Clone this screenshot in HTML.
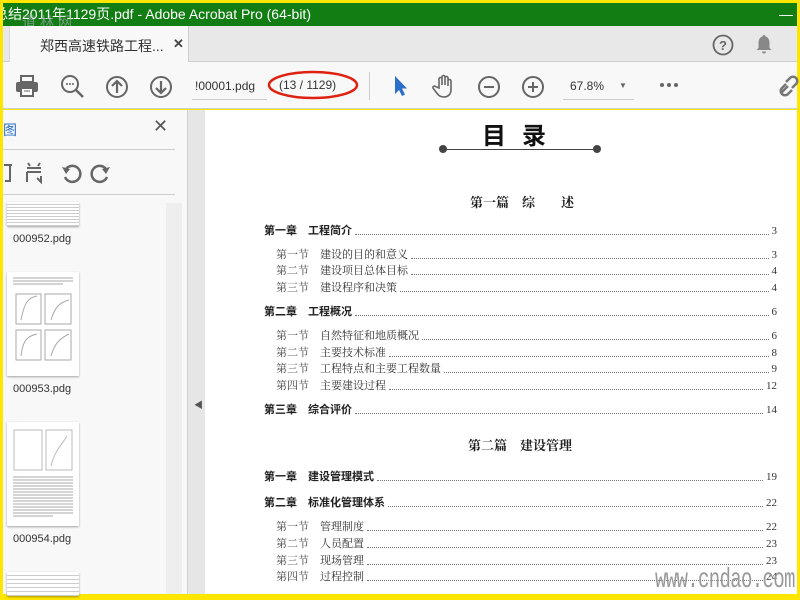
<!DOCTYPE html>
<html><head><meta charset="utf-8"><style>
*{margin:0;padding:0;box-sizing:border-box}
body{width:800px;height:600px;overflow:hidden;background:#ffe600;position:relative;font-family:"Liberation Sans","Noto Sans CJK SC",sans-serif}
.abs{position:absolute}
.title{left:3px;top:3px;width:794px;height:23px;background:#127d13;color:#fff;font-size:14px;line-height:22px;white-space:nowrap;overflow:hidden}
.tabbar{left:3px;top:26px;width:794px;height:36px;background:#e8e8e8;border-bottom:1px solid #cfcfcf}
.tab{left:6px;top:0;width:180px;height:37px;background:#f8f8f8;border-right:1px solid #cfcfcf;border-left:1px solid #d8d8d8}
.toolbar{left:3px;top:62px;width:794px;height:47px;background:#f8f8f8;border-bottom:1px solid #cfcfcf}
.side{left:3px;top:110px;width:185px;height:484px;background:#f8f8f8;border-right:1px solid #cfcfcf}
.gutter{left:188px;top:110px;width:17px;height:484px;background:#e6e6e6}
.page{left:205px;top:110px;width:592px;height:484px;background:#fff}
.row{position:absolute;display:flex;align-items:flex-end;font-family:"Liberation Serif","Noto Serif CJK SC",serif;font-size:11px;color:#333;white-space:nowrap;right:20px;height:14px;line-height:14px}
.row .d{flex:1;border-bottom:1px dotted #777;margin:0 3px 3px}
.row b{font-family:"Liberation Sans","Noto Sans CJK SC",sans-serif;font-weight:bold;color:#222}
.sec{left:71px}.chap{left:59px}
.sec span.n{width:44px;display:inline-block;color:#444}
.chap span.n{width:44px;display:inline-block}
.thumb{position:absolute;left:7px;width:72px;background:#fff;box-shadow:0 1px 2px rgba(0,0,0,.35);overflow:hidden}
.lbl{position:absolute;left:13px;font-size:11px;color:#333}
.ic{position:absolute}
</style></head><body>
<div class="abs title"><span style="position:relative;left:-9px">总结2011年1129页.pdf - Adobe Acrobat Pro (64-bit)</span><span style="position:absolute;right:4px;top:0">—</span></div>
<div class="abs" style="left:22px;top:12px;font-size:14px;color:#9aa;letter-spacing:4px;opacity:.7">道林网</div>
<div class="abs tabbar">
 <div class="abs tab"><span style="position:absolute;left:30px;top:10px;font-size:14px;color:#333">郑西高速铁路工程...</span><span style="position:absolute;left:163px;top:10px;font-size:13px;color:#444;font-weight:bold">✕</span></div>
 <svg class="ic" style="left:709px;top:8px" width="22" height="22"><circle cx="11" cy="11" r="9.5" fill="none" stroke="#666" stroke-width="1.8"/><text x="11" y="16" text-anchor="middle" font-size="13" font-weight="bold" fill="#666" font-family="Liberation Sans">?</text></svg>
 <svg class="ic" style="left:751px;top:7px" width="20" height="22"><path d="M10 2c-1 0-1.5.8-1.5 1.5C5 4.5 4.5 8 4.5 10v5L2.5 17h15l-2-2v-5c0-2-.5-5.5-4-6.5C11.5 2.8 11 2 10 2z" fill="#888"/><path d="M8 18.5a2 2 0 004 0z" fill="#888"/></svg>
</div>
<div class="abs toolbar">
 <svg class="ic" style="left:12px;top:13px" width="24" height="22"><rect x="6" y="1" width="12" height="6" fill="none" stroke="#666" stroke-width="2"/><rect x="1" y="7" width="22" height="10" rx="2" fill="#666"/><rect x="6" y="13" width="12" height="8" fill="#fff" stroke="#666" stroke-width="2"/><line x1="9" y1="16" x2="15" y2="16" stroke="#666"/></svg>
 <svg class="ic" style="left:57px;top:12px" width="26" height="26"><circle cx="10" cy="10" r="8" fill="none" stroke="#666" stroke-width="2"/><line x1="16" y1="16" x2="23" y2="23" stroke="#666" stroke-width="2.5"/><circle cx="7" cy="10" r="1" fill="#666"/><circle cx="10" cy="10" r="1" fill="#666"/><circle cx="13" cy="10" r="1" fill="#666"/></svg>
 <svg class="ic" style="left:102px;top:13px" width="24" height="24"><circle cx="12" cy="12" r="10" fill="none" stroke="#666" stroke-width="2"/><path d="M12 18V6M7 11l5-5 5 5" fill="none" stroke="#666" stroke-width="2.2"/></svg>
 <svg class="ic" style="left:146px;top:13px" width="24" height="24"><circle cx="12" cy="12" r="10" fill="none" stroke="#666" stroke-width="2"/><path d="M12 6v12M7 13l5 5 5-5" fill="none" stroke="#666" stroke-width="2.2"/></svg>
 <div class="abs" style="left:189px;top:15px;width:75px;height:23px;border-bottom:1px solid #ccc;font-size:12px;color:#333;line-height:18px;padding-left:3px">!00001.pdg</div>
 <div class="abs" style="left:276px;top:16px;font-size:12px;color:#333">(13 / 1129)</div>
 <svg class="ic" style="left:260px;top:7px" width="100" height="34"><ellipse cx="50" cy="16" rx="44" ry="13" fill="none" stroke="#d21" stroke-width="2.5"/></svg>
 <div class="abs" style="left:366px;top:10px;width:1px;height:28px;background:#ccc"></div>
 <svg class="ic" style="left:389px;top:13px" width="16" height="22"><path d="M3 1v18l4-4 3 6 3-1.5-3-6h5z" fill="#2a6fc9"/></svg>
 <svg class="ic" style="left:429px;top:11px" width="26" height="26"><path d="M7 15V6a1.5 1.5 0 013 0v6V4a1.5 1.5 0 013 0v8V5a1.5 1.5 0 013 0v8-5a1.5 1.5 0 013 0v9c0 4-3 7-7 7s-6-2-8-5l-3-4a1.5 1.5 0 012.5-1.5z" fill="none" stroke="#666" stroke-width="1.6"/></svg>
 <svg class="ic" style="left:474px;top:13px" width="24" height="24"><circle cx="12" cy="12" r="10" fill="none" stroke="#666" stroke-width="2"/><line x1="7" y1="12" x2="17" y2="12" stroke="#666" stroke-width="2"/></svg>
 <svg class="ic" style="left:518px;top:13px" width="24" height="24"><circle cx="12" cy="12" r="10" fill="none" stroke="#666" stroke-width="2"/><path d="M7 12h10M12 7v10" stroke="#666" stroke-width="2"/></svg>
 <div class="abs" style="left:560px;top:14px;width:71px;height:24px;border-bottom:1px solid #ccc;font-size:12px;color:#333;padding-left:7px;line-height:20px">67.8%<span style="position:absolute;left:56px;top:0;font-size:8px;color:#666">▼</span></div>
 <svg class="ic" style="left:656px;top:20px" width="20" height="6"><circle cx="3" cy="3" r="2" fill="#666"/><circle cx="10" cy="3" r="2" fill="#666"/><circle cx="17" cy="3" r="2" fill="#666"/></svg>
 <svg class="ic" style="left:775px;top:12px" width="22" height="24"><path d="M4 18l6-6M8 8l4-4a4 4 0 016 6l-4 4M14 16l-4 4a4 4 0 01-6-6l4-4" fill="none" stroke="#777" stroke-width="2.5"/></svg>
</div>
<div class="abs side">
 <div class="abs" style="left:0;top:10px;font-size:14px;color:#2a6fc9">图</div>
 <div class="abs" style="left:150px;top:6px;font-size:18px;color:#555">✕</div>
 <div class="abs" style="left:0;top:39px;width:172px;height:1px;background:#ccc"></div>
 <svg class="ic" style="left:0;top:50px" width="110" height="26"><path d="M1 5h8M7 5v16M2 21h6" fill="none" stroke="#666" stroke-width="2"/><path d="M25 3l2 3M37 3l-2 3M24 8h14M24 12h14M24 12v10M38 16v6l-4-4" fill="none" stroke="#666" stroke-width="2"/><path d="M63 9A8 8 0 1 1 62 17" fill="none" stroke="#666" stroke-width="2.5"/><path d="M59 7l4 7 4-5z" fill="#666"/><path d="M103 9A8 8 0 1 0 104 17" fill="none" stroke="#666" stroke-width="2.5"/><path d="M107 7l-4 7-4-5z" fill="#666"/></svg>
 <div class="abs" style="left:0;top:84px;width:172px;height:1px;background:#ccc"></div>
 <div class="abs" style="left:163px;top:93px;width:16px;height:391px;background:#eee"></div>
</div>
<div class="thumb" style="top:202px;height:24px;background:repeating-linear-gradient(#fff 0 2px,#ccc 2px 3px)"></div>
<div class="lbl" style="top:233px">000952.pdg</div>
<div class="thumb" style="top:272px;height:104px"><svg width="72" height="104"><g stroke="#aaa" fill="none"><path d="M6 6h60M6 9h60M6 12h50"/><rect x="9" y="22" width="25" height="30"/><rect x="38" y="22" width="26" height="30"/><rect x="9" y="58" width="25" height="30"/><rect x="38" y="58" width="26" height="30"/><path d="M14 48c4-20 8-22 16-24M44 48c4-14 10-18 18-20M14 84c2-18 8-20 16-22M44 84c4-14 10-18 18-22"/></g></svg></div>
<div class="lbl" style="top:383px">000953.pdg</div>
<div class="thumb" style="top:422px;height:104px;"><svg width="72" height="104"><g stroke="#bbb" fill="none"><rect x="7" y="8" width="28" height="40"/><rect x="39" y="8" width="26" height="40"/><path d="M44 44c4-16 10-20 16-30"/></g><g stroke="#aaa"><path d="M6 55h60M6 58h60M6 61h60M6 64h60M6 67h60M6 70h60M6 73h60M6 76h60M6 79h60M6 82h60M6 85h60M6 88h60M6 91h60M6 94h40"/></g></svg></div>
<div class="lbl" style="top:533px">000954.pdg</div>
<div class="thumb" style="top:572px;height:24px;background:repeating-linear-gradient(#fff 0 3px,#ccc 3px 4px)"></div>
<div class="abs gutter"><span style="position:absolute;left:6px;top:288px;font-size:9px;color:#555">◀</span></div>
<div class="abs page">
 <div class="abs" style="left:277px;top:12px;font-size:24px;line-height:24px;font-weight:bold;letter-spacing:16px;color:#111;font-family:'Noto Sans CJK SC',sans-serif">目录</div>
 <div class="abs" style="left:237px;top:39px;width:156px;height:1px;background:#444"></div>
 <div class="abs" style="left:234px;top:35px;width:8px;height:8px;border-radius:50%;background:#444"></div>
 <div class="abs" style="left:388px;top:35px;width:8px;height:8px;border-radius:50%;background:#444"></div>
 <div class="abs" style="left:265px;top:82px;font-size:13px;font-weight:bold;color:#222;font-family:'Noto Serif CJK SC',serif">第一篇　综　　述</div>
 <div class="row chap" style="top:114px"><b><span class="n">第一章</span>工程简介</b><span class="d"></span>3</div>
 <div class="row sec" style="top:138px"><span class="n">第一节</span>建设的目的和意义<span class="d"></span>3</div>
 <div class="row sec" style="top:154px"><span class="n">第二节</span>建设项目总体目标<span class="d"></span>4</div>
 <div class="row sec" style="top:171px"><span class="n">第三节</span>建设程序和决策<span class="d"></span>4</div>
 <div class="row chap" style="top:195px"><b><span class="n">第二章</span>工程概况</b><span class="d"></span>6</div>
 <div class="row sec" style="top:219px"><span class="n">第一节</span>自然特征和地质概况<span class="d"></span>6</div>
 <div class="row sec" style="top:236px"><span class="n">第二节</span>主要技术标准<span class="d"></span>8</div>
 <div class="row sec" style="top:252px"><span class="n">第三节</span>工程特点和主要工程数量<span class="d"></span>9</div>
 <div class="row sec" style="top:269px"><span class="n">第四节</span>主要建设过程 <span class="d"></span>12</div>
 <div class="row chap" style="top:293px"><b><span class="n">第三章</span>综合评价</b> <span class="d"></span>14</div>
 <div class="abs" style="left:263px;top:325px;font-size:13px;font-weight:bold;color:#222;font-family:'Noto Serif CJK SC',serif">第二篇　建设管理</div>
 <div class="row chap" style="top:360px"><b><span class="n">第一章</span>建设管理模式</b> <span class="d"></span>19</div>
 <div class="row chap" style="top:386px"><b><span class="n">第二章</span>标准化管理体系</b> <span class="d"></span>22</div>
 <div class="row sec" style="top:410px"><span class="n">第一节</span>管理制度 <span class="d"></span>22</div>
 <div class="row sec" style="top:427px"><span class="n">第二节</span>人员配置 <span class="d"></span>23</div>
 <div class="row sec" style="top:444px"><span class="n">第三节</span>现场管理 <span class="d"></span>23</div>
 <div class="row sec" style="top:460px"><span class="n">第四节</span>过程控制 <span class="d"></span>24</div>
 <div class="abs" style="left:450px;top:455px;font-size:28px;color:#999;font-family:'Liberation Mono',monospace;transform:scaleX(.68);transform-origin:left;letter-spacing:-1px">www.cndao.com</div>
</div>
</body></html>
